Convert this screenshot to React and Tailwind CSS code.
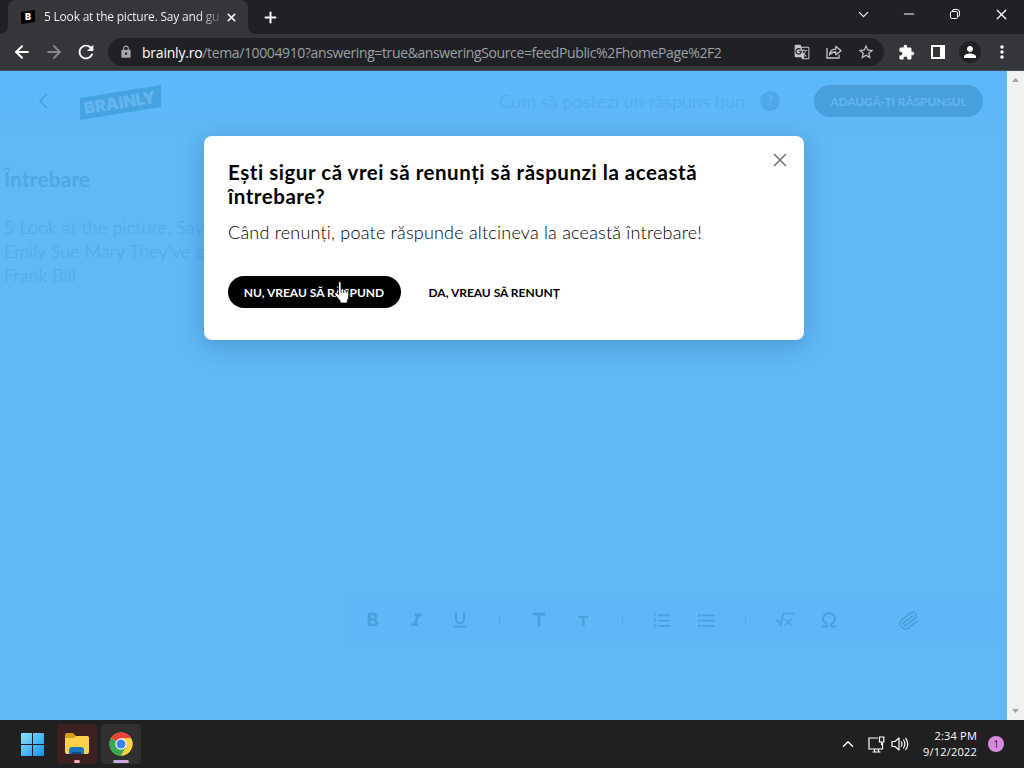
import { ArrowLeft, ArrowRight, ChevronDown, ChevronUp, Minus, Plus, X, Paperclip } from 'lucide-react'
import { MdExtension, MdGTranslate, MdLock, MdMoreVert, MdPerson, MdRefresh, MdStarBorder, MdFormatBold, MdFormatItalic, MdFormatUnderlined, MdFormatListNumbered, MdFormatListBulleted, MdTitle } from 'react-icons/md'

const UI_FONT = "font-['Open_Sans','Noto_Sans',sans-serif]"
const PAGE_FONT = "font-['Lato','Open_Sans',sans-serif]"

const QUESTION_LINES = ['5 Look at the picture. Say and', "Emily Sue Mary They've got", 'Frank Bill']

function Favicon() {
  return (
    <svg width="14" height="14" viewBox="0 0 14 14" className="shrink-0">
      <path d="M0 2L14 0V12L0 14Z" fill="#000" />
      <text x="7" y="10.2" textAnchor="middle" fontSize="9" fontWeight="900" fill="#fff" fontFamily="Inter, sans-serif">B</text>
    </svg>
  )
}

function TabStrip() {
  return (
    <div className="flex h-[34px] bg-[#202124] text-white">
      <div className="flex w-2 items-end bg-[#35363a]"><div className="h-full w-full rounded-br-lg bg-[#202124]" /></div>
      <div className="flex h-full w-60 items-center rounded-t-lg bg-[#35363a] pr-[10px] pl-[13px]">
        <Favicon />
        <span className="ml-[9px] w-[175px] overflow-hidden bg-linear-to-r from-white from-88% to-white/25 bg-clip-text text-[12px] tracking-[-0.21px] whitespace-nowrap text-transparent">5 Look at the picture. Say and gu</span>
        <X size={13} strokeWidth={3} className="ml-[6px] shrink-0" />
      </div>
      <div className="flex w-2 items-end bg-[#35363a]"><div className="h-full w-full rounded-bl-lg bg-[#202124]" /></div>
      <div className="flex w-[28px] items-center justify-center"><Plus size={17} strokeWidth={2.8} /></div>
      <div className="ml-auto flex h-[28px] items-center">
        <div className="flex w-[46px] justify-center"><ChevronDown size={17} strokeWidth={1.6} /></div>
        <div className="flex w-[46px] justify-center"><Minus size={16} strokeWidth={1.6} /></div>
        <div className="flex w-[46px] justify-center">
          <svg width="10" height="10" viewBox="0 0 10 10" fill="none" stroke="#fff">
            <rect x=".5" y="2.5" width="7" height="7" rx="1.3" />
            <path d="M2.5 2.2V2Q2.5.5 4 .5H7Q9.5.5 9.5 3V6Q9.5 7.5 8 7.5" />
          </svg>
        </div>
        <div className="flex w-[46px] justify-center"><X size={17} strokeWidth={1.8} /></div>
      </div>
    </div>
  )
}

function ShareIcon() {
  return (
    <svg width="16" height="14" viewBox="0 0 16 14" fill="none" stroke="#c4c6c9" strokeWidth="1.3">
      <path d="M1 3V13H13V9.5" />
      <path d="M3.5 10Q4 4.2 9.8 4.2V1.3L15 5.8L9.8 9.7V7Q5.5 7 3.5 10Z" strokeLinejoin="round" />
    </svg>
  )
}

function Toolbar() {
  return (
    <div className="flex h-[37px] items-center border-b border-[#4d5053] bg-[#35363a] text-white">
      <div className="flex w-[44px] justify-center"><ArrowLeft size={20} strokeWidth={2.5} /></div>
      <div className="flex w-[20px] justify-center text-[#86888b]"><ArrowRight size={20} strokeWidth={2.4} className="shrink-0" /></div>
      <div className="flex w-[44px] justify-center"><MdRefresh size={22} /></div>
      <div className="flex h-[28px] w-[776px] items-center rounded-full bg-[#202124] pr-[9px] pl-[11px]">
        <MdLock size={14} className="shrink-0 text-[#a4a7aa]" />
        <span className="ml-[9px] text-[14px] tracking-[-0.38px] whitespace-nowrap text-[#9aa0a6]">
          <span className="tracking-[-0.22px] text-white">brainly.ro</span>/tema/10004910?answering=true&amp;answeringSource=feedPublic%2FhomePage%2F2
        </span>
        <div className="ml-auto flex items-center text-[#c4c6c9]">
          <MdGTranslate size={16} />
          <div className="ml-[16px]"><ShareIcon /></div>
          <MdStarBorder size={18} className="ml-[15px]" />
        </div>
      </div>
      <div className="flex w-[44px] justify-center"><MdExtension size={17} /></div>
      <div className="flex w-[20px] justify-center">
        <svg width="14" height="14" viewBox="0 0 14 14" fill="#fff"><path d="M0 0H14V14H0ZM2 2V12H9V2Z" fillRule="evenodd" /></svg>
      </div>
      <div className="flex w-[44px] justify-center">
        <div className="flex size-[22px] items-center justify-center rounded-full bg-[#202124]"><MdPerson size={18} /></div>
      </div>
      <div className="flex w-[20px] justify-center"><MdMoreVert size={20} className="shrink-0" /></div>
    </div>
  )
}

function BrainlyLogo() {
  return (
    <svg width="82" height="36" viewBox="0 0 82 36" overflow="visible">
      <path d="M0 13L81 0V22L0 35Z" fill="#47a3df" />
      <text x="5" y="29" transform="rotate(-9 5 29)" textLength="72" lengthAdjust="spacingAndGlyphs" fontFamily="Inter, sans-serif" fontSize="16.5" fontWeight="900" fill="#63b5ec">BRAINLY</text>
    </svg>
  )
}

function PageHeader() {
  return (
    <div className="flex h-[60px] items-center bg-linear-to-b from-[#5cb8fc] to-[#60b8f4] pr-6 pl-[38px]">
      <svg width="10" height="16" viewBox="0 0 10 16" fill="none" stroke="#4a9ed9" strokeWidth="1.6"><path d="M9 1L2 8L9 15" /></svg>
      <div className="mt-[4px] ml-[32px]"><BrainlyLogo /></div>
      <span className="ml-auto text-[18px] font-light tracking-[0.14px] text-[#50a9e6]">Cum să postezi un răspuns bun</span>
      <div className="ml-[15px] flex size-5 items-center justify-center rounded-full bg-[#50a9e5] text-[13px] font-bold text-[#61b5ed]">?</div>
      <div className="ml-[34px] flex h-8 w-[169px] items-center justify-center rounded-full bg-[#489fdc] pt-px text-[12px] font-bold tracking-[-0.1px] whitespace-nowrap text-[#62b5ed]">ADAUGĂ-ȚI RĂSPUNSUL</div>
    </div>
  )
}

function Separator() {
  return <div className="flex w-[35px] justify-center"><div className="h-2 w-px bg-[#54abe7]" /></div>
}

function EditorToolbar() {
  const cell = 'flex w-[44px] justify-center'
  return (
    <div className="ml-[350px] flex h-[48px] items-center bg-[#5fb7f6] text-[#4b9fda]">
      <div className={cell}><MdFormatBold size={23} /></div>
      <div className={cell}><MdFormatItalic size={21} /></div>
      <div className={cell}><MdFormatUnderlined size={20} /></div>
      <Separator />
      <div className={cell}><MdTitle size={22} /></div>
      <div className={cell}><MdTitle size={17} className="mt-[3px]" /></div>
      <Separator />
      <div className={cell}><MdFormatListNumbered size={21} /></div>
      <div className={cell}><MdFormatListBulleted size={21} /></div>
      <Separator />
      <div className={cell}>
        <svg width="18" height="16" viewBox="0 0 18 16" fill="none" stroke="currentColor" strokeWidth="1.5">
          <path d="M0 8.5H2.5L4.5 13.5L7.5 1.5H18M9 7L15.5 13.5M15.5 7L9 13.5" />
        </svg>
      </div>
      <div className={cell}>
        <svg width="16" height="16" viewBox="0 0 16 16" fill="none" stroke="currentColor" strokeWidth="2">
          <path d="M1 14.5H5.8V12.2Q2 10 2 6.8A6 5.6 0 0 1 14 6.8Q14 10 10.2 12.2V14.5H15" />
        </svg>
      </div>
      <div className="ml-[25px] flex w-[64px] justify-center"><Paperclip size={21} strokeWidth={1.9} className="rotate-[8deg]" /></div>
    </div>
  )
}

function HandCursor() {
  return (
    <svg width="16" height="23" viewBox="0 0 16 23" className="absolute top-[145px] left-[130px]">
      <path d="M4.5 13.5V2.2Q4.5.6 5.8.6T7.1 2.2V8Q9.2 7.2 9.8 8.8Q11.7 8.1 12.2 9.7Q14.6 9.1 14.6 11.5V16Q14.6 18 13.3 19.5V22H6.2V20L1.2 14.2Q.2 12.6 1.2 11.8T3.3 12.2Z" fill="#fff" stroke="#000" strokeWidth=".8" />
      <path d="M7.1 8V12M9.7 9V12M12.2 9.7V12" stroke="#000" strokeWidth=".8" />
    </svg>
  )
}

function ConfirmDialog() {
  return (
    <div className="absolute top-[65px] left-[204px] h-[204px] w-[600px] rounded-lg bg-white px-6 pt-6 text-black shadow-[0_5px_24px_rgba(0,40,80,0.22)]">
      <button className="absolute top-[13px] right-[13px] text-[#777]"><X size={22} strokeWidth={1.8} /></button>
      <h2 className="text-[20.5px] leading-6 font-bold tracking-[0.54px] whitespace-nowrap">Ești sigur că vrei să renunți să răspunzi la această<br />întrebare?</h2>
      <p className="mt-3 text-[18px] leading-6 font-light tracking-[0.21px] whitespace-nowrap">Când renunți, poate răspunde altcineva la această întrebare!</p>
      <div className="mt-8 flex h-8 items-center text-[12px] font-bold tracking-[-0.02px] whitespace-nowrap">
        <button className="h-8 w-[173px] rounded-full bg-black pt-px pr-px text-white">NU, VREAU SĂ RĂSPUND</button>
        <button className="ml-[27.5px] pt-px">DA, VREAU SĂ RENUNȚ</button>
      </div>
      <HandCursor />
    </div>
  )
}

function Scrollbar() {
  return (
    <div className="flex w-[17px] flex-col items-center justify-between bg-[#f0f1f1] py-[7px]">
      <svg width="7" height="4" viewBox="0 0 7 4"><path d="M0 4L3.5 0L7 4Z" fill="#a3a3a3" /></svg>
      <svg width="7" height="4" viewBox="0 0 7 4"><path d="M0 0L3.5 4L7 0Z" fill="#a3a3a3" /></svg>
    </div>
  )
}

function Taskbar() {
  return (
    <div className="flex h-12 items-center bg-[#202020] pl-[21px] text-white">
      <svg width="23" height="23" viewBox="0 0 23 23">
        <defs>
          <linearGradient id="win" x1="0" y1="0" x2="1" y2="1"><stop stopColor="#8be3fb" /><stop offset="1" stopColor="#1591ea" /></linearGradient>
        </defs>
        <path d="M0 1Q0 0 1 0H11V11H0ZM12 0H22Q23 0 23 1V11H12ZM0 12H11V23H1Q0 23 0 22ZM12 12H23V22Q23 23 22 23H12Z" fill="url(#win)" />
      </svg>
      <div className="ml-[13px] flex h-10 w-10 flex-col items-center rounded bg-[#3d2020] pt-[8px]">
        <svg width="26" height="24" viewBox="0 0 26 24">
          <path d="M1 3Q1 1 3 1H9L12 4H23Q25 4 25 6V12H1Z" fill="#d99e1c" />
          <path d="M1 6H10L12.5 4H23Q25 4 25 6V20Q25 22 23 22H3Q1 22 1 20Z" fill="#fdd04b" />
          <path d="M5 22V18Q5 15 8 15H17Q20 15 20 18V22Z" fill="#1976bd" />
          <path d="M8 22V20H17V22Z" fill="#124e83" />
        </svg>
        <div className="mt-[4px] h-[3px] w-[6px] rounded-full bg-[#efb5ba]" />
      </div>
      <div className="ml-[4px] flex h-10 w-10 flex-col items-center rounded bg-[#303030] pt-[8px]">
        <svg width="24" height="24" viewBox="0 0 24 24">
          <circle cx="12" cy="12" r="11.5" fill="#ffcd40" />
          <path d="M12 12L2.04 6.25A11.5 11.5 0 0 1 21.96 6.25H12Z" fill="#ea4335" />
          <path d="M12 12L2.04 6.25A11.5 11.5 0 0 0 12 23.5L17 15Z" fill="#34a853" />
          <path d="M12 6.25H21.96A11.5 11.5 0 0 1 12 23.5L17 14.9Z" fill="#ffcd40" />
          <circle cx="12" cy="12" r="5.7" fill="#fff" />
          <circle cx="12" cy="12" r="4.5" fill="#3b82ed" />
        </svg>
        <div className="mt-[4px] h-[3px] w-4 rounded-full bg-[#cda6e2]" />
      </div>
      <div className="ml-auto flex items-center pr-[20px]">
        <ChevronUp size={18} strokeWidth={1.8} />
        <svg width="17" height="17" viewBox="0 0 17 17" fill="none" stroke="#fff" strokeWidth="1.2" className="ml-[11px]">
          <path d="M10 2H1V13H14.5V7M4.5 16H12.5M6.5 13V16M10.5 13V16M11.5 1H15.8V6H11.5ZM13.6 6V9" />
        </svg>
        <svg width="18" height="18" viewBox="0 0 18 18" fill="none" stroke="#fff" strokeWidth="1.2" strokeLinejoin="round" strokeLinecap="round" className="ml-[6px]">
          <path d="M1 6.5H4L8 3V15L4 11.5H1ZM10.3 6.8Q11.8 9 10.3 11.2M12.6 5Q15.2 9 12.6 13M14.8 3.3Q18.7 9 14.8 14.7" />
        </svg>
        <div className="ml-[10px] w-[58px] text-right text-[11px] leading-4 tracking-[0.2px] whitespace-nowrap"><div>2:34 PM</div><div>9/12/2022</div></div>
        <div className="ml-[11px] flex size-4 items-center justify-center rounded-full bg-[#d88ae0] text-[10px] text-[#2c1730]">1</div>
      </div>
    </div>
  )
}

export default function App() {
  return (
    <div className={`flex h-[768px] w-[1024px] flex-col overflow-hidden ${UI_FONT}`}>
      <TabStrip />
      <Toolbar />
      <div className="relative flex h-[649px] bg-[#60b8f4]">
        <div className={`flex min-w-0 flex-1 flex-col ${PAGE_FONT}`}>
          <PageHeader />
          <div className="pt-[36px] pl-[4px] text-[#4fa8e4]">
            <h1 className="text-[20.5px] leading-6 font-bold tracking-[0.3px]">Întrebare</h1>
            <div className="mt-6 text-[18px] leading-6 font-light tracking-[0.1px]">
              {QUESTION_LINES.map(line => <p key={line} className="w-[240px] overflow-hidden whitespace-nowrap">{line}</p>)}
            </div>
          </div>
          <div className="mt-auto pb-[76px]"><EditorToolbar /></div>
        </div>
        <Scrollbar />
        <div className={PAGE_FONT}><ConfirmDialog /></div>
      </div>
      <Taskbar />
    </div>
  )
}
